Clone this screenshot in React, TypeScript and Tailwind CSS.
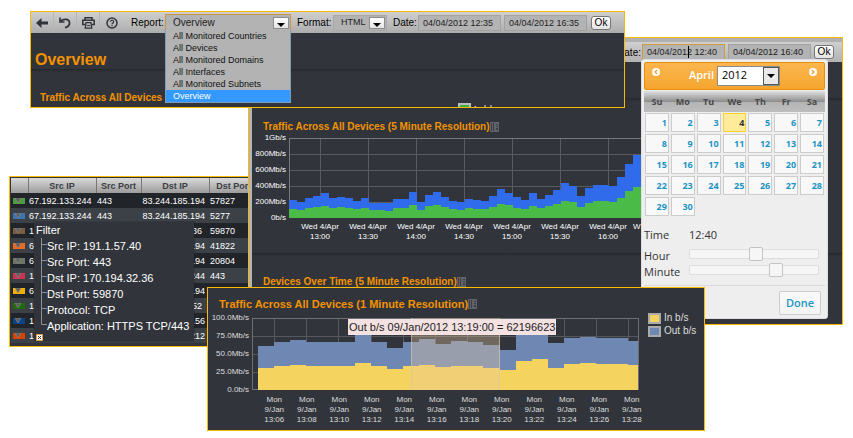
import React from "react";
import clsx from "clsx";

const reports = [
  "All Monitored Countries",
  "All Devices",
  "All Monitored Domains",
  "All Interfaces",
  "All Monitored Subnets",
  "Overview",
];

// Bar heights in pixels, [total, inbound]
const fiveMinute: [number, number][] = [
  [18, 9], [16, 8], [20, 10], [22, 11], [25, 12], [20, 10], [21, 11], [20, 10], [17, 9], [20, 10],
  [15, 8], [15, 8], [15, 7], [19, 10], [19, 10], [26, 13], [16, 8], [23, 12], [26, 13], [21, 11],
  [17, 9], [16, 8], [19, 10], [18, 9], [17, 9], [22, 11], [29, 14], [25, 13], [21, 10], [18, 9],
  [25, 12], [19, 10], [23, 12], [28, 14], [35, 17], [32, 16], [22, 11], [30, 15], [33, 17], [33, 17],
  [32, 16], [41, 20], [54, 27], [63, 31], [57, 29], [50, 25],
];

const oneMinute: [number, number][] = [
  [44, 22], [48, 24], [50, 25], [48, 24], [48, 24], [48, 24], [55, 27], [48, 24], [42, 21], [48, 24],
  [51, 25], [46, 23], [49, 24], [48, 24], [45, 22], [40, 20], [57, 29], [57, 31], [47, 22], [52, 26],
  [53, 27], [52, 26], [52, 26], [49, 25],
];

// Rows behind the filter popup carry only the part of each address beside it
const rows = [
  { c: "bg-[#4f9a3f]", src: "67.192.133.244", sp: "443", dst: "83.244.185.194", dp: "57827" },
  { c: "bg-[#3d74ad]", src: "67.192.133.244", sp: "443", dst: "83.244.185.194", dp: "5277" },
  { c: "bg-[#7a5d42]", src: "1", sp: "", dst: "36", dp: "59870" },
  { c: "bg-[#ea6a25]", src: "6", sp: "", dst: "194", dp: "41822" },
  { c: "bg-[#6f7565]", src: "6", sp: "", dst: "194", dp: "20804" },
  { c: "bg-[#cc3350]", src: "1", sp: "", dst: "244", dp: "443" },
  { c: "bg-[#f2ae00]", src: "6", sp: "", dst: "194", dp: "" },
  { c: "bg-[#1f6b08]", src: "1", sp: "", dst: "52", dp: "" },
  { c: "bg-[#074489]", src: "1", sp: "", dst: ".56", dp: "" },
  { c: "bg-[#d84400]", src: "1", sp: "", dst: "212", dp: "" },
];

const filters = [
  "Src IP: 191.1.57.40",
  "Src Port: 443",
  "Dst IP: 170.194.32.36",
  "Dst Port: 59870",
  "Protocol: TCP",
  "Application: HTTPS TCP/443",
];

function ReportIcon() {
  return (
    <svg width="10" height="10" viewBox="0 0 10 10" aria-hidden="true" className="shrink-0">
      <path d="M0 0h9v10H0z" fill="#5f6266" />
      <path d="M1 1h1v8H1zM3 1h1v8H3zM6 2h2v1H6zM6 4h2v1H6zM6 6h2v2H6z" fill="#3c4045" />
    </svg>
  );
}

function Title({ children, large }: { children: React.ReactNode; large?: boolean }) {
  return (
    <h2
      className={clsx(
        "flex items-center whitespace-nowrap font-bold text-[#f39200]",
        large ? "text-[11px] leading-3" : "text-[10px] leading-3",
      )}
    >
      {children}
      <ReportIcon />
    </h2>
  );
}

function Divider() {
  return <div className="h-1 shrink-0 border-t border-[#25282d] bg-linear-to-b from-[#2a2d32] to-[#31353b]" />;
}

function Arrow() {
  return (
    <span className="pointer-events-none absolute top-1/2 right-[2px] flex h-3 w-4 -translate-y-1/2 items-end justify-center border border-[#8c8c8c] bg-linear-to-b from-white to-[#e4e4e4] pb-px">
      <svg width="8" height="4" viewBox="0 0 8 4" aria-hidden="true">
        <path d="M0 0h8L4 4z" fill="#000" />
      </svg>
    </span>
  );
}

function DateInput({ value, label, active }: { value: string; label: string; active?: boolean }) {
  return (
    <input
      aria-label={label}
      defaultValue={value}
      className={clsx(
        "h-4 w-[83px] border bg-[#b3b3b3] px-1 text-[9px] text-[#222] outline-none",
        active ? "border-[#d29a3f]" : "border-[#a2a2a2]",
      )}
    />
  );
}

function OkButton() {
  return (
    <button className="h-[14px] w-5 rounded-[3px] border border-[#777] bg-linear-to-b from-white to-[#e3e3e3] text-[10px] leading-3 text-black">
      Ok
    </button>
  );
}

function Bars({
  data,
  x0,
  step,
  height,
  out,
  inn,
}: {
  data: [number, number][];
  x0: number;
  step: number;
  height: number;
  out: string;
  inn: string;
}) {
  return (
    <g shapeRendering="crispEdges">
      {data.map(([t, i], k) => (
        <g key={k}>
          <rect x={x0 + k * step} y={height - t} width={step} height={t} fill={out} />
          <rect x={x0 + k * step} y={height - i} width={step} height={i} fill={inn} />
        </g>
      ))}
    </g>
  );
}

function OverviewWindow() {
  return (
    <section className="absolute top-[11px] left-[30px] flex h-[97px] w-[595px] flex-col border border-[#fbba00] bg-[#31353b]">
      <div className="flex h-[21px] shrink-0 items-center bg-linear-to-b from-[#cfcfcf] to-[#adadad] text-[10px] text-black">
        <button aria-label="Back" className="flex h-full w-[23px] items-center justify-center border-r border-[#b5b5b5]">
          <svg width="12" height="10" viewBox="0 0 12 10">
            <path d="M5.500 0v3.500H12v3H5.500V10L0 5z" fill="#30343a" />
          </svg>
        </button>
        <button aria-label="Reload" className="flex h-full w-[23px] items-center justify-center border-r border-[#b5b5b5]">
          <svg width="12" height="12" viewBox="0 0 12 12" fill="none" stroke="#30343a" strokeWidth="1.800">
            <path d="M1.500 4.500C3 2 10.500.8 10.500 6c0 2.500-2 4-4.500 4.700" />
            <path d="M1 .5v4.500h4.500" strokeWidth="1.600" />
          </svg>
        </button>
        <button aria-label="Print" className="flex h-full w-[23px] items-center justify-center border-r border-[#b5b5b5]">
          <svg width="13" height="12" viewBox="0 0 13 12" fill="none" stroke="#30343a" strokeWidth="1.500">
            <path d="M3 3V.8h7V3M3 7.500H.8V3.300h11.400v4.200H10" />
            <path d="M4 5.700h5l.7 5.500H3.300z" strokeWidth="1.300" />
            <path d="M5 8.500h3" strokeWidth="1" />
          </svg>
        </button>
        <button aria-label="Help" className="flex h-full w-[23px] items-center justify-center">
          <svg width="12" height="12" viewBox="0 0 12 12" fill="none" stroke="#30343a">
            <circle cx="6" cy="6" r="5" strokeWidth="1.500" />
            <path d="M4.300 4.800a1.700 1.500 0 1 1 2.500 1.300Q6 6.500 6 7.200M6 8v1.300" strokeWidth="1.200" />
          </svg>
        </button>
        <label htmlFor="report" className="ml-2 w-[34px]">
          Report:
        </label>
        <div className="relative">
          <select
            id="report"
            defaultValue="Overview"
            className="block h-[17px] w-[126px] appearance-none border border-[#cb9541] bg-[#b3b3b3] pl-[7px] text-[10px] text-[#222] outline-none"
          >
            <option>Overview</option>
          </select>
          <Arrow />
          <ul
            role="listbox"
            aria-label="Reports"
            className="absolute top-full left-0 z-10 -mt-px w-[126px] border border-t-0 border-[#7f9db9] bg-[#b3b3b3] text-[9px] leading-3 text-[#111]"
          >
            {reports.map((r) => (
              <li
                key={r}
                role="option"
                aria-selected={r === "Overview"}
                className={clsx("pl-[7px] whitespace-nowrap", r === "Overview" && "bg-[#3399ff] text-white")}
              >
                {r}
              </li>
            ))}
          </ul>
        </div>
        <label htmlFor="format" className="ml-[6px] w-9">
          Format:
        </label>
        <div className="relative">
          <select
            id="format"
            className="block h-4 w-[54px] appearance-none border border-[#a8a8a8] bg-[#b3b3b3] pl-[7px] text-[9px] text-[#222]"
          >
            <option>HTML</option>
          </select>
          <Arrow />
        </div>
        <span className="ml-[6px] w-[25px]">Date:</span>
        <DateInput label="Start date" value="04/04/2012 12:35" />
        <span className="w-[3px]" />
        <DateInput label="End date" value="04/04/2012 16:35" />
        <span className="w-1" />
        <OkButton />
      </div>
      <h1 className="flex h-9 shrink-0 items-end pl-1 text-[16px] leading-[18px] font-bold text-[#f39200]">
        Overview
      </h1>
      <Divider />
      <div className="flex min-h-0 grow items-start overflow-hidden pl-[9px]">
        <h2 className="w-[418px] pt-[19px] text-[10px] leading-3 font-bold whitespace-nowrap text-[#f39200]">
          Traffic Across All Devices
        </h2>
        <div className="flex gap-[3px] pt-[30px] text-[9px] leading-3 text-white">
          <span className="h-[11px] w-[13px] border-2 border-[#bbb] bg-[#3fae3f]" />
          <span>In b/s</span>
        </div>
      </div>
    </section>
  );
}

function FlowTable() {
  return (
    <section className="absolute top-[176px] left-[9px] h-[171px] w-[250px] overflow-hidden border border-[#fbba00] bg-[#31353b] pt-px pl-px">
      <table className="w-full table-fixed border-collapse text-left text-[9px] leading-3 whitespace-nowrap text-white">
        <colgroup>
          <col className="w-[17px]" />
          <col className="w-[68px]" />
          <col className="w-[45px]" />
          <col className="w-[68px]" />
          <col />
        </colgroup>
        <thead>
          <tr className="h-[15px] bg-linear-to-b from-[#d9d9d9] to-[#9c9c9c] text-center text-[#3b3f44]">
            <th className="p-0" aria-label="Colour" />
            <th className="border-l border-[#777] p-0">Src IP</th>
            <th className="border-l border-[#777] p-0">Src Port</th>
            <th className="border-l border-[#777] p-0">Dst IP</th>
            <th className="border-l border-[#777] p-0">Dst Port</th>
          </tr>
        </thead>
        <tbody>
          {rows.map((r, i) => (
            <tr key={i} className="h-[15px] odd:bg-[#212429] even:bg-[#3b4147]">
              <td className="p-0 pl-[2px]">
                <span className={clsx("flex h-[6px] w-3 items-center pl-[2px]", r.c)}>
                  <svg width="6" height="5" viewBox="0 0 6 5" aria-hidden="true">
                    <path d="M0 0h6L3 5z" fill="#5c5c5c" stroke="#999" strokeWidth=".5" />
                  </svg>
                </span>
              </td>
              <td className="p-0 pl-px">{r.src}</td>
              <td className="p-0 pl-px">{r.sp}</td>
              <td className={clsx("p-0 text-right", r.dst.length === 2 ? "pr-[7px]" : "pr-1")}>{r.dst}</td>
              <td className="p-0 pl-px">{r.dp}</td>
            </tr>
          ))}
        </tbody>
      </table>
      <div className="absolute top-[45px] left-6 h-[119px] w-[160px] bg-[#31353b] pl-[2px] text-[11px] text-white shadow-[0_0_1px_#15171a]">
        <div className="h-4 leading-4">Filter</div>
        <ul className="pl-[5px]">
          {filters.map((f, i) => (
            <li key={f} className="flex h-4 whitespace-nowrap">
              <svg width="6" height="16" viewBox="0 0 6 16" aria-hidden="true" className="shrink-0">
                <path
                  d={i === filters.length - 1 ? "M.5 0v6.500H6" : "M.5 0v16M.5 6.500H6"}
                  fill="none"
                  stroke="#8c8f93"
                />
              </svg>
              <span className="leading-4">{f}</span>
            </li>
          ))}
        </ul>
        <button aria-label="Close filter" className="block">
          <svg width="7" height="7" viewBox="0 0 7 7">
            <path d="M.5.5h6v6h-6z" fill="#fff" stroke="#e59a4a" />
            <path d="M2 2l3 3M5 2 2 5" stroke="#333" />
          </svg>
        </button>
      </div>
    </section>
  );
}

function Calendar() {
  const weeks = [0, 1, 2, 3, 4].map((w) => [1, 2, 3, 4, 5, 6, 7].map((d) => w * 7 + d));
  return (
    <div className="absolute top-[15px] -left-px z-10 h-[260px] w-[187px] rounded-[3px] border border-[#ddd] bg-[#eee] p-[2px] font-['Open_Sans','Noto_Sans',sans-serif] text-[11px] text-[#333]">
      <div className="flex h-7 items-center justify-between rounded-[2px] border border-[#e78f08] bg-linear-to-b from-[#fbb64d] to-[#f5a62f] px-[7px] pb-px text-white">
        <button aria-label="Previous month" className="mb-2">
          <svg width="8" height="8" viewBox="0 0 8 8">
            <circle cx="4" cy="4" r="4" fill="#fff" />
            <path d="M5 2 3 4l2 2" fill="none" stroke="#ef9d22" strokeWidth="1.200" />
          </svg>
        </button>
        <div className="flex items-center gap-[3px]">
          <span className="font-semibold">April</span>
          <div className="relative">
            <select
              aria-label="Year"
              className="block h-5 w-[63px] appearance-none border border-[#8a8a8a] bg-white pl-1 text-[11px] font-normal text-black"
            >
              <option>2012</option>
            </select>
            <span className="pointer-events-none absolute top-px right-px flex h-[18px] w-4 items-center justify-center border border-[#555] bg-[#e9e9e9]">
              <svg width="8" height="4" viewBox="0 0 8 4" aria-hidden="true">
                <path d="M0 0h8L4 4z" fill="#000" />
              </svg>
            </span>
          </div>
        </div>
        <button aria-label="Next month" className="mb-2">
          <svg width="8" height="8" viewBox="0 0 8 8">
            <circle cx="4" cy="4" r="4" fill="#fff" />
            <path d="M3 2l2 2-2 2" fill="none" stroke="#ef9d22" strokeWidth="1.200" />
          </svg>
        </button>
      </div>
      <table className="mt-px w-full table-fixed border-collapse text-[9px] leading-3 font-bold">
        <thead>
          <tr className="h-[21px] bg-[linear-gradient(#e0e0e0,#8f8f8f_50%,#b5b5b5_55%,#bdbdbd)] text-[#4a4a4a]">
            {["Su", "Mo", "Tu", "We", "Th", "Fr", "Sa"].map((d) => (
              <th key={d} className="p-0">
                {d}
              </th>
            ))}
          </tr>
        </thead>
        <tbody>
          {weeks.map((w, i) => (
            <tr key={i}>
              {w.map((d) => (
                <td key={d} className="h-[21px] p-px">
                  {d <= 30 && (
                    <button
                      className={clsx(
                        "flex h-[19px] w-full items-center justify-end border pr-px",
                        d === 4
                          ? "border-[#fed22f] bg-[#ffeb99] text-[#363636]"
                          : "border-[#ccc] bg-[#f8f8f8] text-[#1c94c4]",
                      )}
                    >
                      {d}
                    </button>
                  )}
                </td>
              ))}
            </tr>
          ))}
        </tbody>
      </table>
      <div className="mt-[10px] flex h-4 items-center">
        <span className="w-[45px]">Time</span>
        <span>12:40</span>
      </div>
      <div className="mt-[3px] flex h-4 items-center">
        <label htmlFor="hour" className="w-[45px] pt-1">
          Hour
        </label>
        <Slider id="hour" max={23} value={12} />
      </div>
      <div className="flex h-4 items-center">
        <label htmlFor="minute" className="w-[45px] pt-1">
          Minute
        </label>
        <Slider id="minute" max={59} value={41} />
      </div>
      <div className="mt-[7px] flex justify-end border-t border-[#d8d8d8] pt-[5px] pr-1">
        <button className="h-6 w-[42px] rounded-[2px] border border-[#ccc] bg-linear-to-b from-[#fafafa] to-[#f3f3f3] font-semibold text-[#1c94c4]">
          Done
        </button>
      </div>
    </div>
  );
}

function Slider({ id, max, value }: { id: string; max: number; value: number }) {
  return (
    <input
      id={id}
      type="range"
      min={0}
      max={max}
      defaultValue={value}
      className="h-[10px] w-[130px] appearance-none rounded-[2px] border border-[#ddd] bg-[#f6f6f6] [&::-webkit-slider-thumb]:h-[14px] [&::-webkit-slider-thumb]:w-[14px] [&::-webkit-slider-thumb]:appearance-none [&::-webkit-slider-thumb]:rounded-[2px] [&::-webkit-slider-thumb]:border [&::-webkit-slider-thumb]:border-solid [&::-webkit-slider-thumb]:border-[#c4c4c4] [&::-webkit-slider-thumb]:bg-[#f6f6f6]"
    />
  );
}

function TrafficWindow() {
  const times = ["13:00", "13:30", "14:00", "14:30", "15:00", "15:30", "16:00"];
  return (
    <section className="absolute top-[37px] left-[248px] isolate flex h-[288px] w-[595px] border border-[#fbba00] bg-[#31353b]">
      <div className="w-[3px] shrink-0 bg-[#b4b4b4]" />
      <div className="flex min-w-0 grow flex-col">
        <div className="flex h-6 shrink-0 items-center justify-end border-t-4 border-[#b0b0b0] bg-linear-to-b from-[#cfcfcf] to-[#b2b2b2] pr-2 text-[10px] text-black">
          <span className="pr-px">ate:</span>
          <div className="relative flex">
            <DateInput label="Start date" value="04/04/2012 12:40" active />
            <span className="absolute top-[2px] left-[46px] h-3 w-px bg-black" />
            <Calendar />
          </div>
          <span className="w-[3px]" />
          <DateInput label="End date" value="04/04/2012 16:40" />
          <span className="w-[3px]" />
          <OkButton />
        </div>
        <div className="h-9 shrink-0" />
        <Divider />
        <div className="h-[151px] shrink-0 overflow-hidden pt-[19px]">
          <div className="pl-[11px]">
            <Title>Traffic Across All Devices (5 Minute Resolution)</Title>
          </div>
          <div className="mt-[-1px] flex">
            <div className="flex h-[92px] w-[34px] flex-col justify-between text-right text-[8px] leading-3 whitespace-nowrap text-white">
              {["1Gb/s", "800Mb/s", "600Mb/s", "400Mb/s", "200Mb/s", "0b/s"].map((l) => (
                <span key={l}>{l}</span>
              ))}
            </div>
            <div className="grow overflow-hidden pt-[6px] pl-[3px]">
              <svg width="400" height="80" viewBox="0 0 400 80" className="block">
                <g stroke="#585c61" shapeRendering="crispEdges">
                  {[16, 32, 48, 64].map((y) => (
                    <path key={y} d={`M0 ${y + 0.5}H400`} />
                  ))}
                  {[0, 1, 2, 3, 4, 5, 6, 7].map((k) => (
                    <path key={k} d={`M${31.5 + k * 48} 0V80`} />
                  ))}
                  <path d="M0 .5H400M.5 0V80" stroke="#75787c" />
                </g>
                <Bars data={fiveMinute} x0={0} step={8} height={80} out="#2f6bea" inn="#4bbb48" />
              </svg>
              <div className="flex pt-1 pl-[7px] text-center text-[8px] leading-[10px] whitespace-nowrap text-white">
                {times.map((t) => (
                  <div key={t} className="w-12 shrink-0">
                    Wed 4/Apr
                    <br />
                    {t}
                  </div>
                ))}
                <div className="pl-px">W</div>
              </div>
            </div>
          </div>
        </div>
        <Divider />
        <div className="pt-[19px] pl-[11px]">
          <Title>Devices Over Time (5 Minute Resolution)</Title>
        </div>
      </div>
    </section>
  );
}

function MinuteWindow() {
  const times = [
    "13:06", "13:08", "13:10", "13:12", "13:14", "13:16",
    "13:18", "13:20", "13:22", "13:24", "13:26", "13:28",
  ];
  return (
    <section className="absolute top-[287px] left-[207px] h-[144px] w-[498px] border border-[#fbba00] bg-[#31353b] pt-[10px]">
      <div className="pl-[11px]">
        <Title large>Traffic Across All Devices (1 Minute Resolution)</Title>
      </div>
      <div className="mt-[2px] flex">
        <div className="flex h-[84px] w-[42px] shrink-0 flex-col justify-between pr-px text-right text-[8px] leading-3 whitespace-nowrap text-[#ddd]">
          {["100.0Mb/s", "75.0Mb/s", "50.0Mb/s", "25.0Mb/s", "0.0b/s"].map((l) => (
            <span key={l}>{l}</span>
          ))}
        </div>
        <div className="relative w-[398px] shrink-0 pt-[6px]">
          <svg width="389" height="72" viewBox="0 0 389 72" className="ml-[2px] block">
            <g stroke="#55595e" shapeRendering="crispEdges">
              {[18, 36, 54].map((y) => (
                <path key={y} d={`M0 ${y + 0.5}H387`} />
              ))}
              {times.map((t, k) => (
                <path key={t} d={`M${22.5 + k * 32.2} 0V72`} />
              ))}
              <path d="M.5 .5H386.500V71.500H.5z" fill="none" stroke="#6c6f73" />
            </g>
            <svg width="386" height="72">
              <Bars data={oneMinute} x0={6} step={16.1} height={72} out="#6e87b3" inn="#f4d35e" />
            </svg>
            <path d="M159 0h89v72h-89z" fill="#e8c8a0" fillOpacity=".35" />
            <path d="M159.500 0v72M247.500 0v72" stroke="#d6c7a8" strokeOpacity=".6" />
          </svg>
          <div className="flex pt-[5px] pl-2">
            {times.map((t) => (
              <div key={t} className="min-w-0 flex-1 text-center text-[8px] leading-[10px] text-[#ddd]">
                Mon
                <br />
                9/Jan
                <br />
                {t}
              </div>
            ))}
          </div>
          <div className="absolute top-[7px] left-[98px] bg-[#f4e2e2] px-px text-[11px] leading-4 whitespace-nowrap text-[#222]">
            Out b/s 09/Jan/2012 13:19:00 = 62196623
          </div>
        </div>
        <ul className="flex flex-col gap-px text-[10px] leading-3 whitespace-nowrap text-[#ddd]">
          <li className="flex items-center gap-[3px]">
            <span className="h-[11px] w-[13px] border-2 border-[#aaa] bg-[#f4d35e]" />
            In b/s
          </li>
          <li className="flex items-center gap-[3px]">
            <span className="h-[11px] w-[13px] border-2 border-[#aaa] bg-[#6e87b3]" />
            Out b/s
          </li>
        </ul>
      </div>
    </section>
  );
}

export default function App() {
  return (
    <main className="relative min-h-screen w-full overflow-hidden bg-white font-['Liberation_Sans',Arial,sans-serif]">
      <FlowTable />
      <TrafficWindow />
      <OverviewWindow />
      <MinuteWindow />
    </main>
  );
}
